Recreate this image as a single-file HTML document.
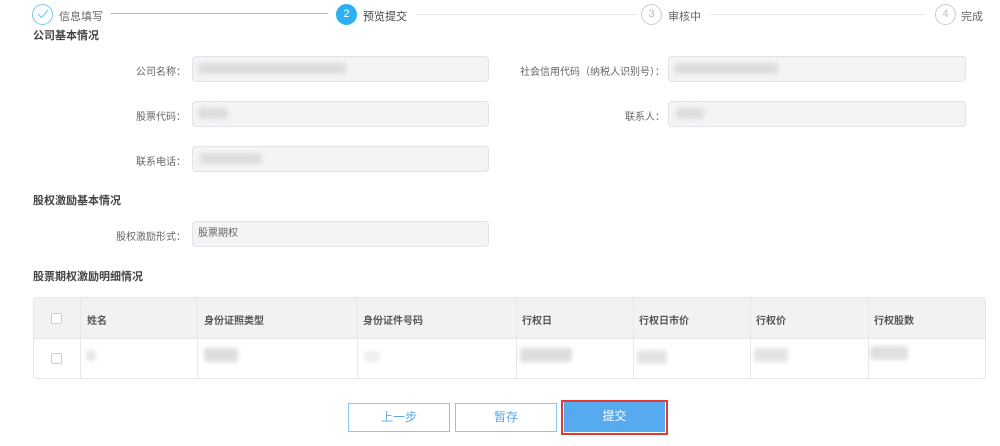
<!DOCTYPE html>
<html><head><meta charset="utf-8"><style>
*{margin:0;padding:0;box-sizing:border-box}
body{width:1000px;height:446px;background:#fff;position:relative;overflow:hidden;font-family:"Liberation Sans","Noto Sans CJK SC",sans-serif;font-size:12px;color:#555}
.a{position:absolute}
.circ{position:absolute;width:21px;height:21px;border-radius:50%;border:1px solid #ccc;color:#bbb;text-align:center;line-height:19px;font-size:11px}
.st{position:absolute;top:8px;font-size:11px;color:#666}
.h{position:absolute;left:33px;font-size:11px;font-weight:bold;color:#444}
.lb{position:absolute;text-align:right;color:#666;font-size:10px}
.in{position:absolute;height:26px;background:#f3f4f6;border:1px solid #e2e3e6;border-radius:4px;font-size:10px;color:#666;line-height:24px;padding-left:5px}
.blur{position:absolute;background:#ddd;filter:blur(2px);height:11px;border-radius:3px}
.tb{position:absolute;left:33px;top:297px;width:953px;height:82px;border:1px solid #e6e6e6;border-radius:4px;overflow:hidden}
.th{position:absolute;left:0;top:0;width:100%;height:41px;background:#f2f2f2;border-bottom:1px solid #e6e6e6}
.cl{position:absolute;top:0;height:82px;border-left:1px solid #e8e8e8}
.hd{position:absolute;top:14px;font-size:10px;font-weight:bold;color:#555}
.cb{position:absolute;left:17px;width:11px;height:11px;border:1px solid #ccc;border-radius:2px;background:#fff}
.btn{position:absolute;top:403px;height:29px;width:102px;border:1px solid #8cc6f0;color:#5aa8e6;text-align:center;line-height:27px;font-size:12px;background:#fff}
</style></head><body>
<div class="circ" style="left:32px;top:4px;border-color:#7ec6ee;color:#7ec6ee"><svg width="12" height="10" viewBox="0 0 12 10" style="margin-top:4px"><path d="M1 5l3.5 3.5L11 1" stroke="#7ec6ee" stroke-width="1.2" fill="none"/></svg></div>
<div class="st" style="left:59px">信息填写</div>
<div class="a" style="left:111px;top:13px;width:217px;height:1px;background:#80c8f0"></div>
<div class="circ" style="left:336px;top:4px;background:#2db0f2;border-color:#2db0f2;color:#fff">2</div>
<div class="st" style="left:363px;color:#444">预览提交</div>
<div class="a" style="left:416px;top:14px;width:222px;height:1px;background:#e8e8e8"></div>
<div class="circ" style="left:641px;top:4px">3</div>
<div class="st" style="left:668px">审核中</div>
<div class="a" style="left:710px;top:14px;width:216px;height:1px;background:#e8e8e8"></div>
<div class="circ" style="left:935px;top:4px">4</div>
<div class="st" style="left:961px">完成</div>

<div class="h" style="top:27px">公司基本情况</div>
<div class="lb" style="left:60px;width:126px;top:63px">公司名称：</div>
<div class="in" style="left:192px;top:56px;width:297px"></div><div class="blur" style="left:198px;top:63px;width:148px"></div>
<div class="lb" style="left:500px;width:165px;top:63px">社会信用代码（纳税人识别号）：</div>
<div class="in" style="left:668px;top:56px;width:298px"></div><div class="blur" style="left:674px;top:63px;width:104px"></div>
<div class="lb" style="left:60px;width:126px;top:108px">股票代码：</div>
<div class="in" style="left:192px;top:101px;width:297px"></div><div class="blur" style="left:198px;top:108px;width:30px"></div>
<div class="lb" style="left:500px;width:165px;top:108px">联系人：</div>
<div class="in" style="left:668px;top:101px;width:298px"></div><div class="blur" style="left:676px;top:108px;width:28px"></div>
<div class="lb" style="left:60px;width:126px;top:153px">联系电话：</div>
<div class="in" style="left:192px;top:146px;width:297px"></div><div class="blur" style="left:200px;top:153px;width:62px"></div>

<div class="h" style="top:192px">股权激励基本情况</div>
<div class="lb" style="left:60px;width:126px;top:228px">股权激励形式：</div>
<div class="in" style="left:192px;top:221px;width:297px">股票期权</div>
<div class="h" style="top:268px">股票期权激励明细情况</div>

<div class="tb">
<div class="th"></div>
<div class="cl" style="left:46px"></div><div class="cl" style="left:163px"></div><div class="cl" style="left:323px"></div><div class="cl" style="left:482px"></div><div class="cl" style="left:599px"></div><div class="cl" style="left:716px"></div><div class="cl" style="left:834px"></div>
<div class="cb" style="top:15px"></div><div class="cb" style="top:55px"></div>
<div class="hd" style="left:53px">姓名</div><div class="hd" style="left:170px">身份证照类型</div><div class="hd" style="left:329px">身份证件号码</div><div class="hd" style="left:488px">行权日</div><div class="hd" style="left:605px">行权日市价</div><div class="hd" style="left:722px">行权价</div><div class="hd" style="left:840px">行权股数</div>
<div class="blur" style="left:52px;top:52px;width:10px;background:#e6e6e6"></div>
<div class="blur" style="left:170px;top:50px;width:34px;height:14px"></div>
<div class="blur" style="left:330px;top:53px;width:16px;background:#eee"></div>
<div class="blur" style="left:486px;top:50px;width:52px;height:14px"></div>
<div class="blur" style="left:603px;top:52px;width:30px;height:14px;background:#e4e4e4"></div>
<div class="blur" style="left:720px;top:50px;width:34px;height:14px;background:#e4e4e4"></div>
<div class="blur" style="left:836px;top:48px;width:38px;height:14px;background:#e0e0e0"></div>
</div>

<div class="btn" style="left:348px">上一步</div>
<div class="btn" style="left:455px">暂存</div>
<div class="a" style="left:561px;top:400px;width:107px;height:35px;border:2px solid #e53935"></div>
<div class="btn" style="left:564px;top:402px;width:101px;height:30px;background:#55aaf0;border-color:#55aaf0;color:#fff">提交</div>
</body></html>
